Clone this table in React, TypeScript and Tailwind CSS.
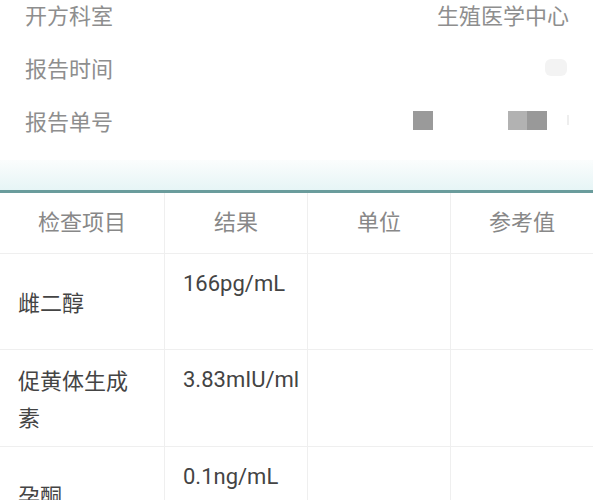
const font = { fontFamily: '"Noto Sans CJK SC", Roboto, "Liberation Sans", sans-serif' };

const infoRows = [
  { label: "开方科室", value: "生殖医学中心" },
  { label: "报告时间", value: "" },
  { label: "报告单号", value: "" },
];

const results = [
  { name: "雌二醇", result: "166pg/mL" },
  { name: "促黄体生成素", result: "3.83mIU/ml" },
  { name: "孕酮", result: "0.1ng/mL" },
];

const cols = "grid grid-cols-[165px_143px_143px_1fr]";

export default function App() {
  return (
    <div className="h-[500px] w-[593px] overflow-hidden bg-white" style={font}>
      <div className="flex flex-col gap-[25px] pl-[25px] pr-[24px]">
        {infoRows.map((row, i) => (
          <div key={row.label} className="flex h-[28px] items-center justify-between text-[22px] leading-[28px] text-[#8e8e8e]">
            <span>{row.label}</span>
            {i === 0 && <span>{row.value}</span>}
            {i === 1 && <span className="mr-[2px] h-[17px] w-[22px] rounded-md bg-[#f3f3f3]" />}
            {i === 2 && (
              <span className="flex items-center">
                <span className="h-[19px] w-[20px] bg-[#9a9a9a]" />
                <span className="ml-[75px] h-[19px] w-[19px] bg-[#b2b2b2]" />
                <span className="h-[19px] w-[20px] bg-[#999]" />
                <span className="ml-[20px] h-[10px] w-[2px] bg-[#eee]" />
              </span>
            )}
          </div>
        ))}
      </div>

      <div className="mt-[26px] h-[30px] bg-gradient-to-b from-[#fbfdfd] to-[#e6f5f6]" />
      <div className="h-[3px] bg-[#6a9c9c]" />

      <div className={`${cols} h-[61px] border-b border-[#efefef] text-[22px] text-[#888]`}>
        {["检查项目", "结果", "单位", "参考值"].map((h, i) => (
          <div key={h} className={`flex items-center justify-center pb-[5px] ${i < 3 ? "border-r border-[#efefef]" : ""}`}>
            {h}
          </div>
        ))}
      </div>

      {results.map((r) => (
        <div key={r.name} className={`${cols} min-h-[96px] border-b border-[#efefef] text-[22px] leading-[37px] text-[#444]`}>
          <div className="flex items-center border-r border-[#efefef] px-[18px] py-[11px]">
            <span>{r.name}</span>
          </div>
          <div className="border-r border-[#efefef] px-[18px] py-[11px]" style={{ fontFamily: 'Roboto, "Liberation Sans", sans-serif' }}>
            {r.result}
          </div>
          <div className="border-r border-[#efefef]" />
          <div />
        </div>
      ))}
    </div>
  );
}
